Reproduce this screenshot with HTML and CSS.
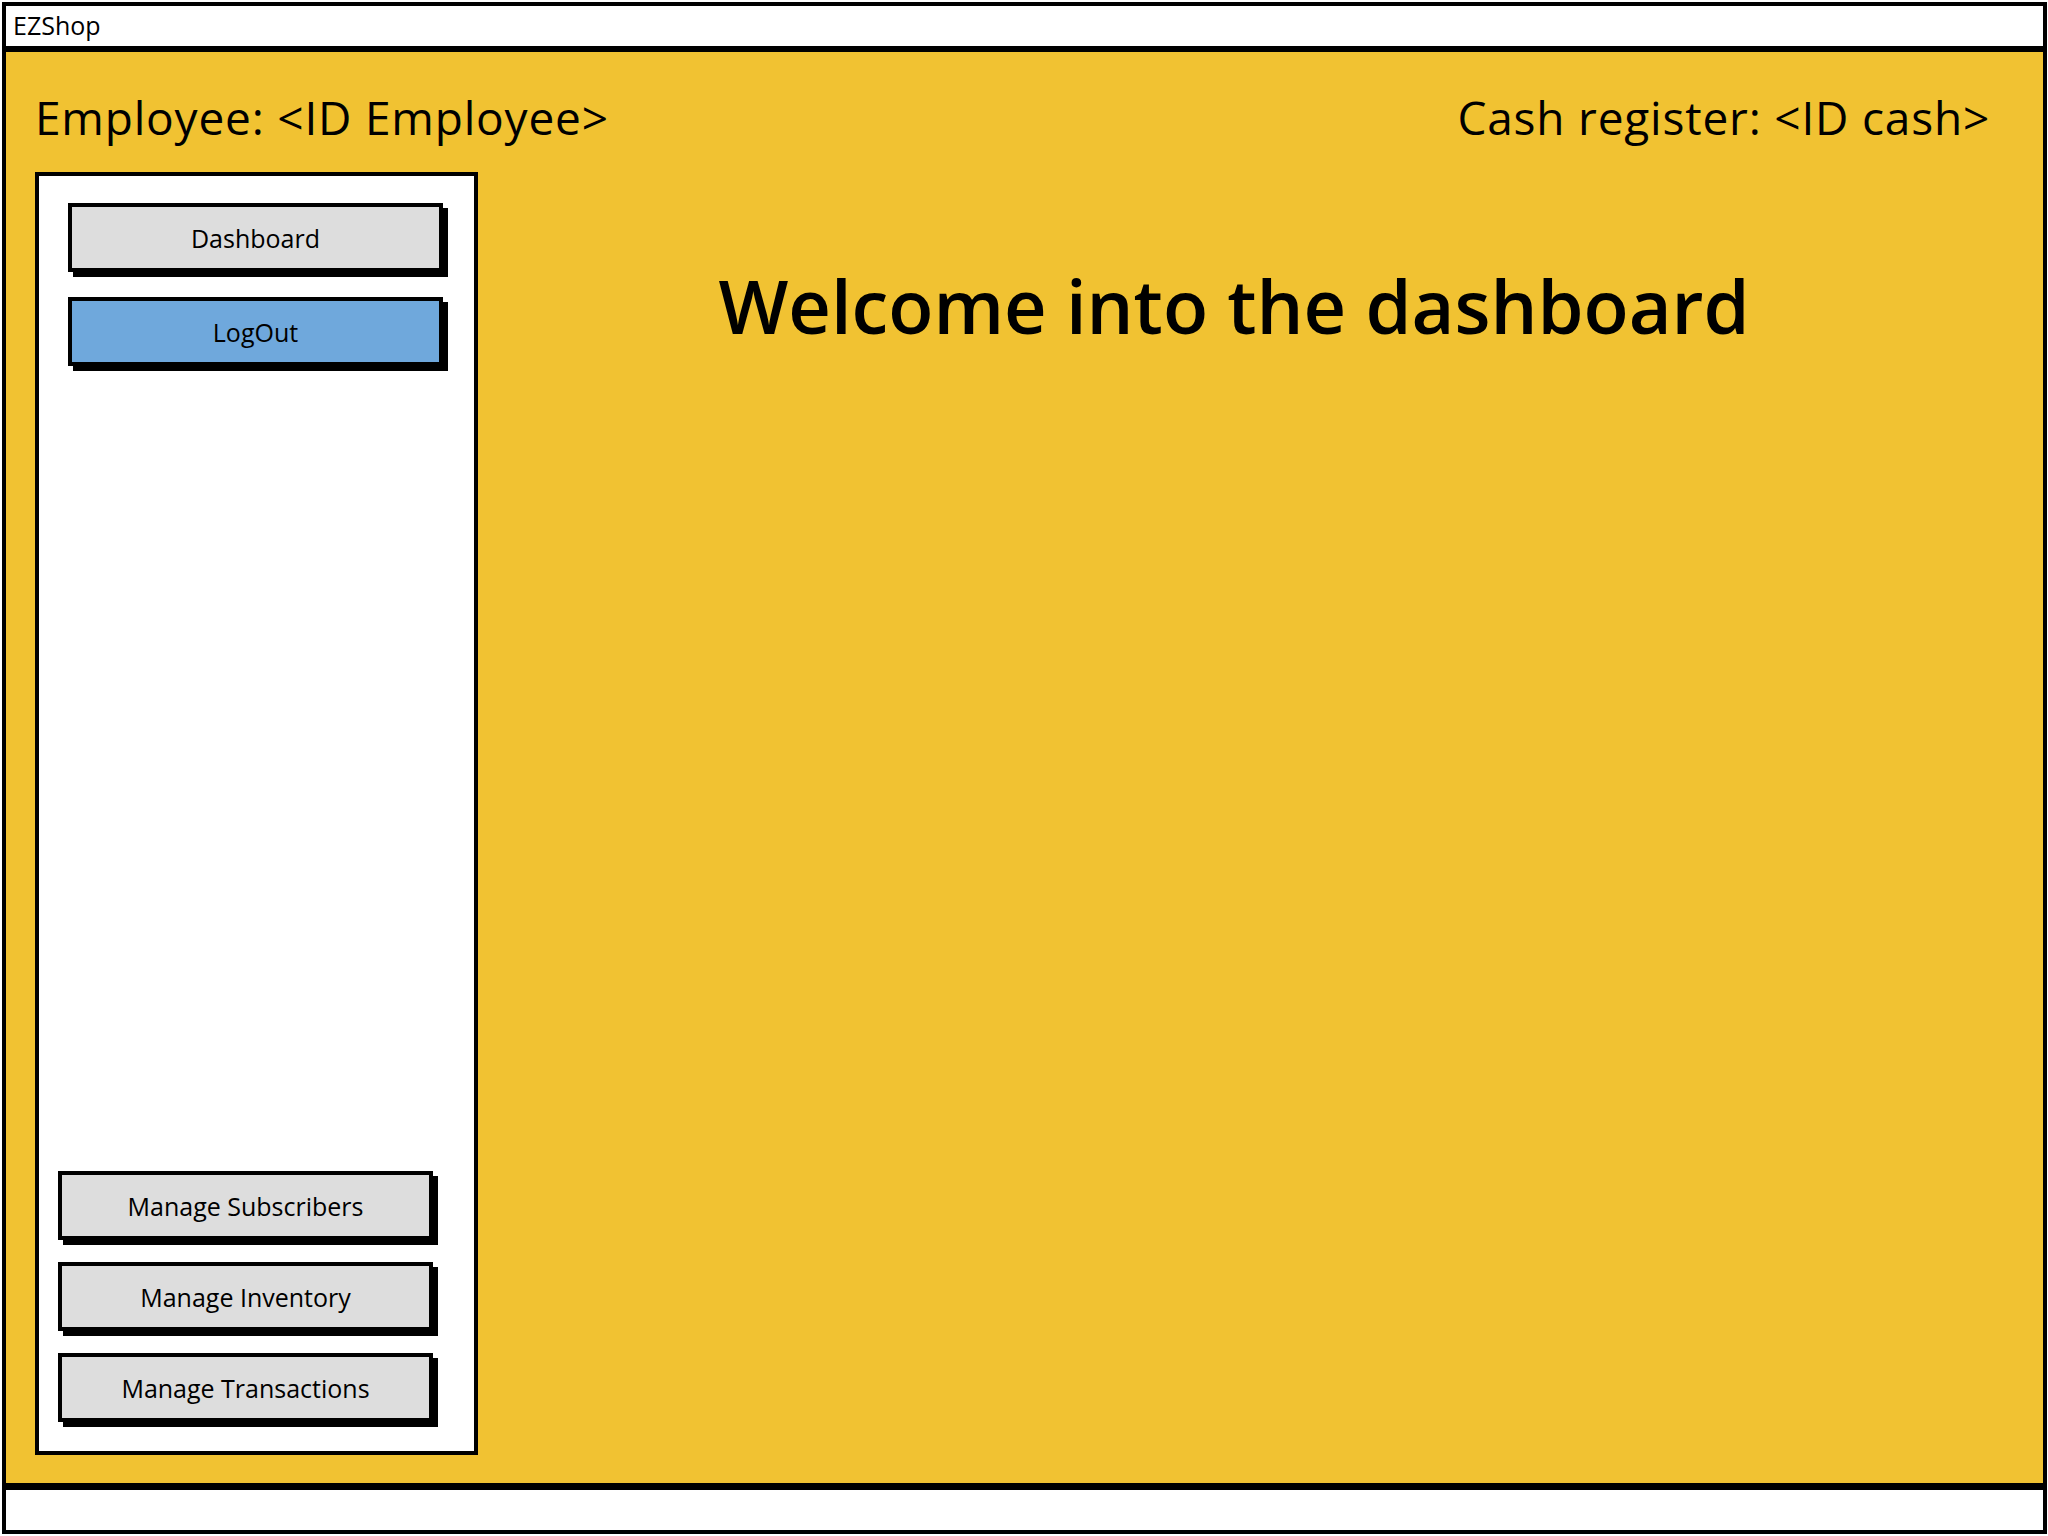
FILE: index.html
```html
<!DOCTYPE html>
<html>
<head>
<meta charset="utf-8">
<title>EZShop</title>
<link rel="stylesheet" href="styles.css">
</head>
<body>
<div class="window">
  <div class="titlebar">EZShop</div>
  <div class="main">
    <div class="header">
      <div class="label">Employee: &lt;ID Employee&gt;</div>
      <div class="label">Cash register: &lt;ID cash&gt;</div>
    </div>
    <div class="body">
      <div class="sidebar">
        <div class="group top">
          <div class="btn">Dashboard</div>
          <div class="btn blue">LogOut</div>
        </div>
        <div class="group bottom">
          <div class="btn">Manage Subscribers</div>
          <div class="btn">Manage Inventory</div>
          <div class="btn">Manage Transactions</div>
        </div>
      </div>
      <div class="content">
        <h1 class="welcome">Welcome into the dashboard</h1>
      </div>
    </div>
  </div>
  <div class="statusbar"></div>
</div>
</body>
</html>
```
FILE: styles.css
```css
html, body {
  margin: 0;
  padding: 0;
  background: #fff;
}
body {
  font-family: "Open Sans", "Noto Sans", sans-serif;
  color: #000;
}
.window {
  box-sizing: border-box;
  margin: 2px 0 0 2px;
  width: 2045px;
  height: 1532px;
  border: 4px solid #000;
  display: flex;
  flex-direction: column;
  background: #fff;
}
.titlebar {
  height: 40px;
  border-bottom: 6px solid #000;
  font-size: 25px;
  line-height: 38px;
  padding-left: 7px;
  flex: none;
}
.main {
  flex: 1;
  background: #F1C232;
  padding: 38px 0 28px 29px;
  display: flex;
  flex-direction: column;
  min-height: 0;
}
.header {
  display: flex;
  justify-content: space-between;
  padding-right: 53px;
  height: 55px;
  margin-bottom: 27px;
  flex: none;
}
.label {
  font-size: 46px;
  font-weight: 500;
  line-height: 55px;
  letter-spacing: 0.8px;
}
.body {
  flex: 1;
  display: flex;
  min-height: 0;
}
.sidebar {
  box-sizing: border-box;
  width: 443px;
  flex: none;
  background: #fff;
  border: 4px solid #000;
  display: flex;
  flex-direction: column;
  justify-content: space-between;
  padding: 27px 0 29px 0;
}
.group {
  display: flex;
  flex-direction: column;
}
.group.top {
  gap: 25px;
  padding-left: 29px;
}
.group.bottom {
  gap: 22px;
  padding-left: 19px;
}
.btn {
  box-sizing: border-box;
  width: 375px;
  height: 69px;
  border: 4px solid #000;
  background: #DDDDDD;
  box-shadow: 5px 5px 0 #000;
  font-size: 25px;
  font-weight: 500;
  display: flex;
  align-items: center;
  justify-content: center;
}
.btn.blue {
  background: #6FA8DC;
}
.content {
  flex: 1;
  text-align: center;
  padding: 89px 53px 0 0;
}
.welcome {
  margin: 0;
  font-weight: 600;
  font-size: 74px;
  line-height: 90px;
}
.statusbar {
  height: 40px;
  border-top: 7px solid #000;
  flex: none;
}
```
